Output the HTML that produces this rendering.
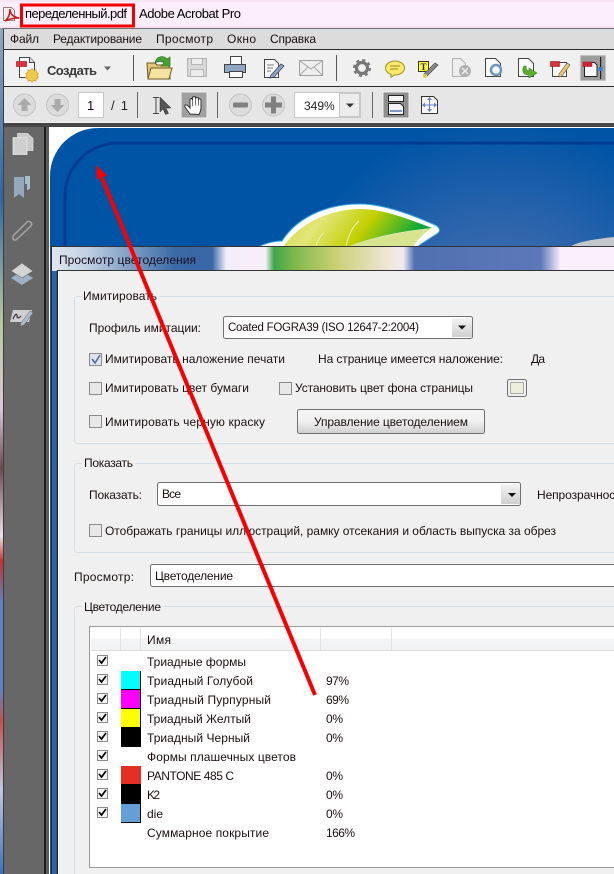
<!DOCTYPE html>
<html><head><meta charset="utf-8"><style>
html,body{margin:0;padding:0;background:#fff;width:614px;height:874px;overflow:hidden}
svg{display:block}
text{font-family:"Liberation Sans","Noto Sans CJK JP",sans-serif;font-size:12px;fill:#1a1010}
</style></head><body>
<svg width="614" height="874" viewBox="0 0 614 874" xmlns="http://www.w3.org/2000/svg">
<defs>
<linearGradient id="tb" gradientUnits="userSpaceOnUse" x1="52" x2="614" y1="0" y2="0">
<stop offset="0" stop-color="#dfe6ef"/><stop offset=".06" stop-color="#c3d1e3"/><stop offset=".14" stop-color="#7f9dc5"/><stop offset=".22" stop-color="#3a69a6"/><stop offset=".285" stop-color="#3a68a6"/><stop offset=".31" stop-color="#f4eefa"/><stop offset=".38" stop-color="#f8eefa"/><stop offset=".395" stop-color="#3fa548"/><stop offset=".43" stop-color="#7db84e"/><stop offset=".5" stop-color="#c6cf70"/><stop offset=".6" stop-color="#f0e6d6"/><stop offset=".625" stop-color="#f0ebf2"/><stop offset=".645" stop-color="#5070b0"/><stop offset=".87" stop-color="#5d78b8"/><stop offset=".905" stop-color="#fbeffc"/><stop offset="1" stop-color="#fbeffc"/>
</linearGradient>
<radialGradient id="bgr" gradientUnits="userSpaceOnUse" cx="500" cy="340" r="220">
<stop offset="0" stop-color="#4776bb"/><stop offset=".5" stop-color="#3066ac"/><stop offset="1" stop-color="#0054a6"/>
</radialGradient>
<linearGradient id="leaf" x1="0" x2="1" y1="0" y2=".2">
<stop offset="0" stop-color="#c8d435"/><stop offset=".3" stop-color="#e2e67a"/><stop offset=".62" stop-color="#c3d000"/><stop offset="1" stop-color="#00a53c"/>
</linearGradient>
<linearGradient id="btn" x1="0" x2="0" y1="0" y2="1"><stop offset="0" stop-color="#f6f6f6"/><stop offset=".5" stop-color="#f0f0f0"/><stop offset="1" stop-color="#cfcfcf"/></linearGradient>
<linearGradient id="hd" x1="0" x2="0" y1="0" y2="1"><stop offset="0" stop-color="#fff"/><stop offset=".45" stop-color="#fff"/><stop offset=".5" stop-color="#f3f4f5"/><stop offset="1" stop-color="#f2f3f4"/></linearGradient>
<linearGradient id="drop" x1="0" x2="0" y1="0" y2="1"><stop offset="0" stop-color="#f4f4f4"/><stop offset="1" stop-color="#cfcfcf"/></linearGradient>
<linearGradient id="edge" x1="0" x2="0" y1="0" y2="1">
<stop offset="0" stop-color="#8fa9c0"/><stop offset=".2" stop-color="#2f66a8"/><stop offset=".35" stop-color="#b9c99a"/><stop offset=".45" stop-color="#d8c8d8"/><stop offset=".52" stop-color="#6a4a50"/><stop offset=".6" stop-color="#eadfe8"/><stop offset=".63" stop-color="#c83030"/><stop offset=".68" stop-color="#5b83cc"/><stop offset=".78" stop-color="#5b83cc"/><stop offset=".82" stop-color="#c85050"/><stop offset=".9" stop-color="#c0c8e0"/><stop offset="1" stop-color="#3a70c0"/>
</linearGradient>
</defs>

<!-- title bar -->
<rect width="614" height="28" fill="#fdeefb"/>
<rect y="0" width="614" height="2" fill="#f6e4f2"/>
<rect y="26" width="614" height="2" fill="#f6e2f0"/>
<path d="M3.500 7.500h8l3 3v10h-11z" fill="#f8eeee" stroke="#8a5a5a" stroke-width=".8"/>
<path d="M5 21c4-3 5-7 5-12 0 5 3 8 9 9-5 0-10 1-14 3z" fill="none" stroke="#c81c1c" stroke-width="1.600"/>
<text x="25" y="18" textLength="102" style="font-size:13px;fill:#000">переделенный.pdf</text>
<rect x="21.500" y="5" width="112" height="21" fill="none" stroke="#f00000" stroke-width="3"/>
<text x="139" y="18" textLength="102" style="font-size:13px;fill:#000">Adobe Acrobat Pro</text>

<!-- left outer edge -->
<rect x="0" y="28" width="3" height="846" fill="url(#edge)"/>
<rect x="3" y="28" width="1" height="846" fill="#3c3c3c"/>
<rect x="2" y="28" width="612" height="1" fill="#707070"/>

<!-- menu -->
<rect x="4" y="29" width="610" height="20" fill="#dcdcdc"/>
<rect x="4" y="49" width="610" height="1" fill="#2c2c2c"/>
<text x="10" y="43" textLength="29">Файл</text>
<text x="53" y="43" textLength="89">Редактирование</text>
<text x="156" y="43" textLength="57">Просмотр</text>
<text x="227" y="43" textLength="29">Окно</text>
<text x="270" y="43" textLength="46">Справка</text>

<!-- toolbar 1 -->
<rect x="4" y="50" width="610" height="36" fill="#f0f0f0"/>
<rect x="4" y="86" width="610" height="1" fill="#2c2c2c"/>
<!-- create icon -->
<path d="M19.500 57.500h10l5 5v15h-15z" fill="#fafafa" stroke="#444"/>
<path d="M29.500 57.500v5h5" fill="#ddd" stroke="#444"/>
<rect x="16.500" y="61.500" width="10" height="5" fill="#e03040" stroke="#a02020" stroke-width=".7"/>
<path d="M32 68.500l1.500 2 2.500-.8.300 2.500 2.200 1.300-1.300 2 1.300 2.200-2.200 1-.3 2.500-2.500-.7-1.500 1.900-1.500-1.900-2.500.7-.3-2.500-2.200-1 1.300-2.200-1.300-2 2.200-1.300.3-2.500 2.500.8z" fill="#f2c848" stroke="#c89820" stroke-width=".6"/>
<text x="47" y="75" textLength="50" style="font-weight:bold;font-size:13px;fill:#3a3a3a">Создать</text>
<path d="M104 66.500h7l-3.500 4z" fill="#666"/>
<rect x="133" y="55" width="1" height="26" fill="#555"/>
<!-- open -->
<path d="M148 79l-1-16h8l2 2h12l1 14z" fill="#e2c67a" stroke="#6e5a20"/>
<path d="M148 79l3-11h21l-3 11z" fill="#f4e3a0" stroke="#6e5a20"/>
<path d="M155 63c1-7 9-8 12-4l3-2v9h-9l3-3c-2-2-6-2-9 0z" fill="#4aa038" stroke="#2f7a20" stroke-width=".7"/>
<!-- save -->
<path d="M187.500 58.500h19v18h-19z" fill="#d9d9d9" stroke="#b4b4b4"/><rect x="191.500" y="58.500" width="11" height="6" fill="#ececec" stroke="#b4b4b4"/><rect x="190.500" y="69.500" width="13" height="7" fill="#ececec" stroke="#b4b4b4"/>
<!-- print -->
<rect x="230.500" y="56.500" width="11" height="8" fill="#fafafa" stroke="#444"/>
<path d="M224.500 64.500h21v8h-21z" fill="#8da6c4" stroke="#444"/>
<rect x="229.500" y="71.500" width="13" height="6" fill="#fafafa" stroke="#444"/>
<!-- edit -->
<path d="M264.500 59.500h10l4 4v14h-14z" fill="#fafafa" stroke="#444"/>
<path d="M267 65h7M267 68h6M267 71h4" stroke="#777"/>
<path d="M271 75l10-11 3 2-10 11-4 1z" fill="#86a6d0" stroke="#445" stroke-width=".8"/>
<!-- mail -->
<rect x="299.500" y="60.500" width="23" height="15" fill="#eee" stroke="#a0a0a0"/>
<path d="M300 61l11 8 11-8M300 75l8-8M322 75l-8-8" fill="none" stroke="#a8a8a8"/>
<rect x="336" y="55" width="1" height="26" fill="#555"/>
<!-- gear -->
<circle cx="362" cy="68" r="5.500" fill="#f0f0f0" stroke="#777" stroke-width="3.200"/>
<circle cx="362" cy="68" r="8" fill="none" stroke="#777" stroke-width="2" stroke-dasharray="3.100 3.180"/>
<!-- comment -->
<ellipse cx="395" cy="68" rx="9.500" ry="7" fill="#fbe96a" stroke="#a09030"/>
<path d="M391 74l0 3.500 4-3" fill="#fbe96a" stroke="#a09030"/><path d="M390 66h10M390 69h8" stroke="#9a8a30"/>
<!-- T note -->
<rect x="418.500" y="61.500" width="10" height="10" fill="#ffff30" stroke="#333"/>
<text x="420.500" y="70" style="font-size:9px;font-weight:bold;fill:#222;font-family:'Liberation Serif',serif">T</text>
<path d="M424 74l11-11 3 2-11 11z" fill="#888" stroke="#555" stroke-width=".8"/><circle cx="425" cy="76" r="2" fill="#d8d040"/>
<!-- grey doc x -->
<path d="M452.500 58.500h8l5 5v13h-13z" fill="#eee" stroke="#b0b0b0"/><circle cx="465" cy="71" r="6" fill="#b0b0b0"/><path d="M462 68l6 6M468 68l-6 6" stroke="#eee" stroke-width="1.400"/>
<!-- refresh doc -->
<path d="M485.500 58.500h10l5 5v13h-15z" fill="#fafafa" stroke="#444"/><circle cx="496" cy="70" r="5" fill="#f8f8f8" stroke="#6c95bd" stroke-width="2.500"/>
<!-- green arrow doc -->
<path d="M518.500 58.500h10l5 5v13h-15z" fill="#fafafa" stroke="#444"/><path d="M524 66c-3 6 0 9 5 9v3l8-5-8-5v3c-2 0-3-2-3-5z" fill="#5ab030" stroke="#3a8020" stroke-width=".6"/>
<!-- red pencil doc -->
<path d="M552.500 62.500h14v14h-14z" fill="#fafafa" stroke="#444"/><rect x="550.500" y="61.500" width="9" height="5" fill="#e03030" stroke="#902020" stroke-width=".6"/><path d="M559 74l8-11 3 2-8 11-3 1z" fill="#f0c070" stroke="#555" stroke-width=".6"/>
<!-- active -->
<rect x="580" y="55" width="26" height="26" fill="#9c9c9c" stroke="#e8e8e8"/>
<path d="M584.500 62.500h10l2.500 2.500v11.500h-12.500z" fill="#f8f8f8" stroke="#222"/><rect x="583" y="62" width="9" height="4.500" fill="#d82030" stroke="#801818" stroke-width=".5"/>
<rect x="600" y="57" width="1.200" height="22" fill="#222"/><rect x="598.500" y="67" width="4" height="4" fill="#3a80d0"/>

<!-- toolbar 2 -->
<rect x="4" y="87" width="610" height="35" fill="#e6e6e6"/>
<rect x="4" y="122" width="610" height="1" fill="#f0f0f0"/>
<rect x="4" y="123" width="610" height="4" fill="#474747"/>
<circle cx="24.500" cy="105" r="11" fill="#dcdcdc" stroke="#c4c4c4"/><path d="M24.500 98l7 7h-4v6h-6v-6h-4z" fill="#aaa"/>
<circle cx="57.500" cy="105" r="11" fill="#dcdcdc" stroke="#c4c4c4"/><path d="M57.500 112l7-7h-4v-6h-6v6h-4z" fill="#aaa"/>
<rect x="78.500" y="92.500" width="25" height="25" fill="#fff" stroke="#c8c8c8"/>
<text x="87" y="110" style="font-size:13px;fill:#200010">1</text>
<text x="111" y="110" textLength="17" style="font-size:13px;fill:#222">/ 1</text>
<rect x="137" y="92" width="1" height="26" fill="#666"/>
<path d="M153 97.500h6M153 113.500h6M156 97v17" stroke="#444" fill="none"/>
<path d="M160 97l11 11h-5l2.500 5.500-3 1-2.500-5.500-3 3z" fill="#555" stroke="#333" stroke-width=".5"/>
<rect x="181" y="92" width="26" height="26" fill="#a0a0a0" stroke="#f0f0f0"/>
<path d="M190 114l-5-7c-1-2 1-3 3-1l2 2v-8c0-2 2-2 2.500 0v-2c0-2 3-2 3 0v1c0-2 3-2 3 0v1c0-1.500 2.500-1.500 2.500.5v7c0 3-1 5-2 7z" fill="#fff" stroke="#333"/>
<path d="M192.500 100v6M195.500 98.500v7M198.500 99.500v6" stroke="#555" stroke-width=".8"/>
<rect x="217" y="92" width="1" height="26" fill="#666"/>
<circle cx="240.500" cy="105" r="11" fill="#dcdcdc" stroke="#c4c4c4"/><rect x="233" y="102.500" width="15" height="5" rx="1" fill="#808080"/>
<circle cx="273.500" cy="105" r="11" fill="#dcdcdc" stroke="#c4c4c4"/><path d="M265 102.500h6v-6h5v6h6v5h-6v6h-5v-6h-6z" fill="#808080"/>
<rect x="294.500" y="92.500" width="66" height="25" fill="#fff" stroke="#c8c8c8"/>
<rect x="339.500" y="93.500" width="20" height="23" fill="#ececec" stroke="#c8c8c8"/>
<text x="304" y="110" style="font-size:12px;fill:#222">349%</text>
<path d="M346 103.500h8l-4 4z" fill="#333"/>
<rect x="372" y="92" width="1" height="26" fill="#666"/>
<rect x="383" y="92" width="26" height="26" fill="#8e8e8e" stroke="#f0f0f0"/>
<rect x="388.500" y="95.500" width="15" height="6" fill="#f4f4f4" stroke="#222"/>
<path d="M388.500 103.500h12l3 3v8h-15z" fill="#f4f4f4" stroke="#222"/><path d="M390 111h12" stroke="#5a78b8" stroke-width="1.500"/>
<path d="M421.500 96.500h12l4 4v13h-16z" fill="#f6f6f6" stroke="#333"/>
<path d="M429.500 98v13M423 105h13" stroke="#6a80b8"/><path d="M427 100l2.500-3 2.500 3zM427 109l2.500 3 2.500-3zM425 102.500l-3 2.500 3 2.500zM434 102.500l3 2.500-3 2.500z" fill="#6a80b8"/>

<!-- sidebar -->
<rect x="4" y="127" width="40" height="747" fill="#676767"/>
<rect x="44" y="127" width="2" height="747" fill="#1e1e1e"/>
<rect x="46" y="127" width="3" height="747" fill="#5c5c5c"/>
<path d="M17.500 133.500h10l5.500 5v12h-15z" fill="#c9c9c9" stroke="#e4e4e4" stroke-width=".7"/>
<path d="M13 137.500h14v17H13z" fill="#cfcfcf" stroke="#e8e8e8" stroke-width=".8"/>
<path d="M25 176h5v13l-3 1v-6h-2z" fill="#a9bccb"/>
<path d="M14 177h10v21l-5-4-5 4z" fill="#95a9bd"/>
<path d="M14 235l13-13c2-2 6 1 4 4l-14 13c-3 3-6-1-3-4l12-12" fill="none" stroke="#a5a5a5" stroke-width="1.500"/>
<path d="M22 271l11 7-11 7-11-7z" fill="#9db2c4"/><path d="M22 263l11 8-11 7-11-7z" fill="#d4d4d4" stroke="#666" stroke-width=".6"/>
<path d="M13 310h19l-3 12H10z" fill="#cfcfcf"/>
<path d="M13 319c2-5 4-6 4-3s2 2 4 0" fill="none" stroke="#333" stroke-width="1.200"/>
<path d="M21 323l9-12 3 2-9 12-4 1z" fill="#a9bccb" stroke="#666" stroke-width=".5"/>

<!-- page -->
<rect x="49" y="127" width="565" height="747" fill="#fff"/>
<path d="M98 128H614V874H50V176a48 48 0 0 1 48-48z" fill="url(#bgr)"/>
<path d="M65 260V196a53 53 0 0 1 53-53H614" fill="none" stroke="#003d92" stroke-width="3"/>
<!-- leaf -->
<path d="M258 247c6-3 15-6 24-6 14-22 42-37 78-37 25 0 55 12 75 21 6 3 6 7 0 10-6 4-13 8-18 12z" fill="#fff" stroke="#36a8e0" stroke-width="1"/>
<path d="M283 247c15-22 45-38 77-38 25 0 50 11 72 19-30 3-60 9-85 19z" fill="url(#leaf)"/>
<path d="M347 247c25-10 55-15 85-19-8 5-15 12-19 19z" fill="#d8e490"/>
<path d="M316 247c1-6 4-11 8-14M346 247c2-12 6-20 13-26" fill="none" stroke="#eef0c0" stroke-width="1"/>
<path d="M570 247c6-5 25-8 44-10v10z" fill="#c4c8cc"/>

<!-- dialog frame -->
<rect x="50" y="246" width="564" height="628" fill="#1e5492"/>
<rect x="52" y="247" width="4" height="627" fill="#2c62a6"/>
<rect x="52" y="247" width="562" height="24" fill="url(#tb)"/>
<rect x="51" y="246" width="563" height="1" fill="#333"/>
<rect x="51" y="246" width="1" height="628" fill="#2b2b2b"/>
<text x="59" y="264" textLength="137" style="fill:#181020">Просмотр цветоделения</text>
<rect x="57" y="270" width="557" height="1" fill="#333"/>
<rect x="57" y="270" width="1" height="604" fill="#222"/>
<rect x="58" y="271" width="556" height="603" fill="#f0f0f0"/>
<rect x="58" y="271" width="1" height="603" fill="#fff"/>

<!-- group boxes -->
<rect x="74.500" y="296.500" width="560" height="147" rx="3" fill="none" stroke="#d6e0e8"/>
<rect x="82" y="292" width="77" height="10" fill="#f0f0f0"/>
<text x="83" y="300" textLength="74">Имитировать</text>
<rect x="74.500" y="463.500" width="560" height="89" rx="3" fill="none" stroke="#d6e0e8"/>
<rect x="82" y="458" width="53" height="10" fill="#f0f0f0"/>
<text x="84" y="467" textLength="49">Показать</text>
<rect x="74.500" y="606.500" width="560" height="300" rx="3" fill="none" stroke="#d6e0e8"/>
<rect x="82" y="601" width="81" height="10" fill="#f0f0f0"/>
<text x="84" y="611" textLength="77">Цветоделение</text>

<text x="89" y="332" textLength="112">Профиль имитации:</text>
<rect x="223.500" y="316.500" width="249" height="22" rx="2" fill="#fff" stroke="#707070"/>
<rect x="452" y="318" width="20" height="19" fill="url(#drop)"/>
<text x="228" y="331" textLength="191" style="font-size:11.500px">Coated FOGRA39 (ISO 12647-2:2004)</text>
<path d="M458 325.500h8l-4 4z" fill="#111"/>

<!-- checkboxes -->
<rect x="89.500" y="353.500" width="12" height="12" fill="#dfe3ee" stroke="#8a8a8a"/>
<path d="M92 359l3 4 5-8" fill="none" stroke="#5a6a9a" stroke-width="1.600"/>
<text x="105" y="363" textLength="180">Имитировать наложение печати</text>
<text x="318" y="363" textLength="185">На странице имеется наложение:</text>
<text x="531" y="363" textLength="14">Да</text>

<rect x="89.500" y="382.500" width="12" height="12" fill="#e8e8e8" stroke="#8a8a8a"/>
<text x="105" y="392" textLength="144">Имитировать цвет бумаги</text>
<rect x="279.500" y="382.500" width="12" height="12" fill="#e8e8e8" stroke="#8a8a8a"/>
<text x="295" y="392" textLength="178">Установить цвет фона страницы</text>
<rect x="507.500" y="379.500" width="19" height="17" rx="2" fill="#f0f0f0" stroke="#707070"/>
<rect x="510.500" y="382.500" width="13" height="11" fill="#eeeedc" stroke="#aaa"/>

<rect x="89.500" y="415.500" width="12" height="12" fill="#e8e8e8" stroke="#8a8a8a"/>
<text x="105" y="426" textLength="160">Имитировать черную краску</text>
<rect x="297.500" y="409.500" width="187" height="24" rx="2" fill="url(#btn)" stroke="#707070"/>
<text x="314" y="426" textLength="154">Управление цветоделением</text>

<text x="89" y="499" textLength="53">Показать:</text>
<rect x="157.500" y="482.500" width="363" height="23" rx="2" fill="#fff" stroke="#707070"/>
<rect x="501" y="484" width="19" height="20" fill="url(#drop)"/>
<text x="162" y="498" textLength="19">Все</text>
<path d="M508 493h8l-4 4z" fill="#111"/>
<text x="537" y="499" textLength="93">Непрозрачность:</text>
<rect x="89.500" y="524.500" width="12" height="12" fill="#e8e8e8" stroke="#8a8a8a"/>
<text x="105" y="535" textLength="451">Отображать границы иллюстраций, рамку отсекания и область выпуска за обрез</text>

<text x="74" y="581" textLength="60">Просмотр:</text>
<rect x="150.500" y="564.500" width="480" height="22" rx="2" fill="#fff" stroke="#707070"/>
<text x="155" y="580" textLength="78">Цветоделение</text>

<!-- table -->
<rect x="89.500" y="626.500" width="540" height="241" fill="#fff" stroke="#9a9a9a"/>
<rect x="91" y="628" width="530" height="22" fill="url(#hd)"/>
<rect x="91" y="650" width="530" height="1" fill="#dcdcdc"/>
<path d="M120.500 628v22M140.500 628v22M320.500 628v22M391.500 628v22" stroke="#e2e2e2"/>
<text x="147" y="644" textLength="24">Имя</text>

<g fill="#f4f4f4" stroke="#8a8a8a">
<rect x="97.500" y="655.500" width="10" height="10"/><rect x="97.500" y="674.500" width="10" height="10"/><rect x="97.500" y="693.500" width="10" height="10"/><rect x="97.500" y="712.500" width="10" height="10"/><rect x="97.500" y="731.500" width="10" height="10"/><rect x="97.500" y="750.500" width="10" height="10"/><rect x="97.500" y="769.500" width="10" height="10"/><rect x="97.500" y="788.500" width="10" height="10"/><rect x="97.500" y="807.500" width="10" height="10"/>
</g>
<g fill="none" stroke="#000" stroke-width="1.700">
<path d="M99 660l2.500 3 4.500-6"/><path d="M99 679l2.500 3 4.500-6"/><path d="M99 698l2.500 3 4.500-6"/><path d="M99 717l2.500 3 4.500-6"/><path d="M99 736l2.500 3 4.500-6"/><path d="M99 755l2.500 3 4.500-6"/><path d="M99 774l2.500 3 4.500-6"/><path d="M99 793l2.500 3 4.500-6"/><path d="M99 812l2.500 3 4.500-6"/>
</g>

<rect x="121" y="671" width="20" height="19" fill="#000"/><rect x="121" y="671" width="19" height="18" fill="#00ffff"/>
<rect x="121" y="690" width="20" height="19" fill="#000"/><rect x="121" y="690" width="19" height="18" fill="#ff00ff"/>
<rect x="121" y="709" width="20" height="18" fill="#000"/><rect x="121" y="709" width="19" height="18" fill="#ffff00"/>
<rect x="121" y="727" width="20" height="20" fill="#000"/>
<rect x="121" y="766" width="20" height="18" fill="#e42f24"/>
<rect x="121" y="784" width="20" height="20" fill="#000"/>
<rect x="121" y="804" width="20" height="19" fill="#000"/><rect x="121" y="804" width="19" height="18" fill="#659fd8"/>

<text x="147" y="666" textLength="99">Триадные формы</text>
<text x="147" y="685" textLength="106">Триадный Голубой</text>
<text x="147" y="704" textLength="124">Триадный Пурпурный</text>
<text x="147" y="723" textLength="104">Триадный Желтый</text>
<text x="147" y="742" textLength="103">Триадный Черный</text>
<text x="147" y="761" textLength="149">Формы плашечных цветов</text>
<text x="147" y="780" textLength="87">PANTONE 485 C</text>
<text x="147" y="799" textLength="13">K2</text>
<text x="147" y="818" textLength="16">die</text>
<text x="147" y="837" textLength="122">Суммарное покрытие</text>
<text x="326" y="685" textLength="23">97%</text>
<text x="326" y="704" textLength="23">69%</text>
<text x="326" y="723" textLength="17">0%</text>
<text x="326" y="742" textLength="17">0%</text>
<text x="326" y="780" textLength="17">0%</text>
<text x="326" y="799" textLength="17">0%</text>
<text x="326" y="818" textLength="17">0%</text>
<text x="326" y="837" textLength="29">166%</text>

<!-- red arrow -->
<path d="M315 695L102 178" stroke="#f80000" stroke-width="4" fill="none"/>
<path d="M96 165l11 10.500-10 4z" fill="#f80000"/>
</svg>
</body></html>
